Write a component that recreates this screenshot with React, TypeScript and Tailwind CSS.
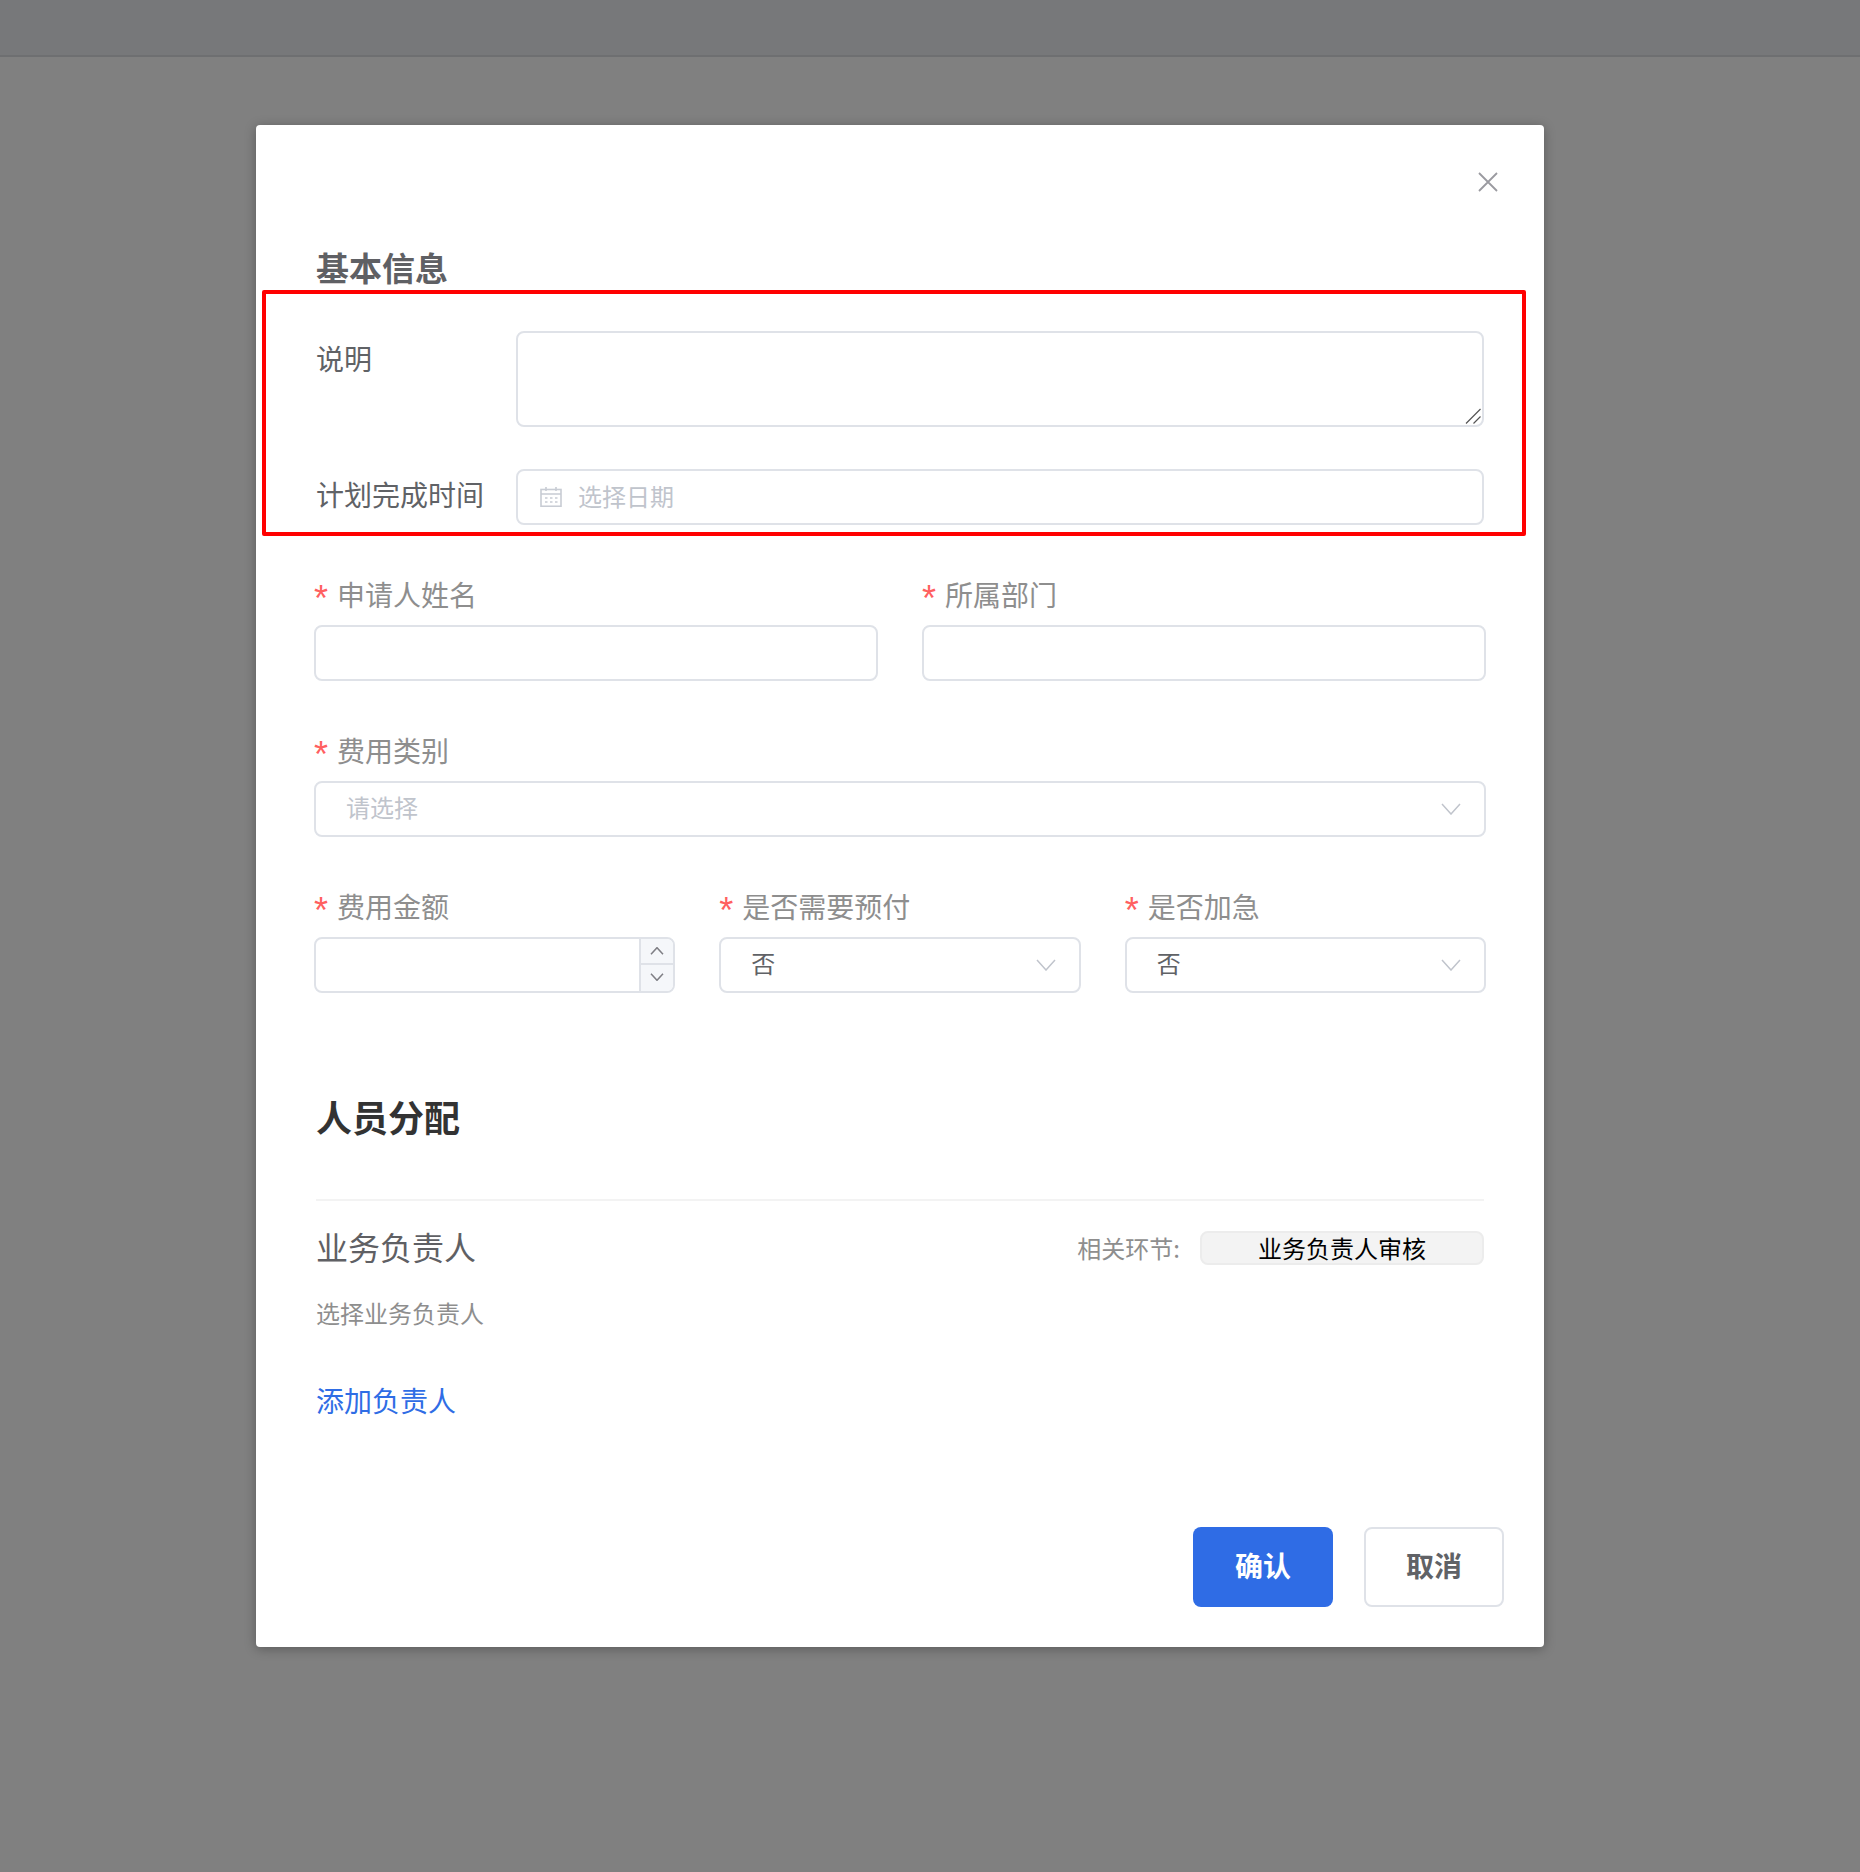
import React from 'react';

const labelClass = 'text-[28px] leading-[40px] text-[#8e8e8e]';
const fieldClass =
  'h-[56px] w-full rounded-[8px] border-2 border-[#dfe2e8] bg-white text-[24px] text-[#606266] outline-none placeholder:text-[#c0c4cc]';

const Chevron: React.FC<{ up?: boolean; className?: string }> = ({ up, className }) => (
  <svg viewBox="0 0 20 12" fill="none" stroke="currentColor" strokeWidth="1.5" className={className}>
    <path d={up ? 'M1 11 L10 1 L19 11' : 'M1 1 L10 11 L19 1'} vectorEffect="non-scaling-stroke" />
  </svg>
);

const CalendarIcon: React.FC = () => (
  <svg viewBox="0 0 22 20" fill="none" stroke="#c8ccd4" strokeWidth="1.6" className="h-[20px] w-[22px] shrink-0">
    <rect x="1" y="2.5" width="20" height="16.75" />
    <path d="M1 7 H21 M6 0 V4 M16 0 V4" />
    <path d="M5 11 H7.5 M10 11 H12.5 M15 11 H17.5 M5 15 H7.5 M10 15 H12.5 M15 15 H17.5" />
  </svg>
);

const RequiredLabel: React.FC<{ text: string }> = ({ text }) => (
  <div className={`${labelClass} -mt-[1px] mb-[11px] flex`}>
    <span className="mr-[10px] h-[40px] w-[13px] font-['Liberation_Sans',sans-serif] text-[36px] leading-[50px] text-[#ff6060]">*</span>
    {text}
  </div>
);

const SelectBox: React.FC<{ value?: string; placeholder?: string }> = ({ value, placeholder }) => (
  <div className="flex h-[56px] items-center justify-between rounded-[8px] border-2 border-[#dfe2e8] bg-white pl-[30px] pr-[23px] text-[24px]">
    <span className={value ? 'pb-[4px] text-[#606266]' : 'pb-[4px] text-[#c0c4cc]'}>{value || placeholder}</span>
    <Chevron className="h-[12px] w-[20px] text-[#c0c4cc]" />
  </div>
);

const App: React.FC = () => {
  return (
    <div className="h-[1872px] w-full overflow-hidden bg-[#808080] font-['Noto_Sans_CJK_SC','Liberation_Sans',sans-serif]">
      <div className="h-[57px] border-b-2 border-[#6e6f71] bg-[#77787a]" />

      <div className="ml-[256px] mt-[68px] w-[1288px] rounded-[4px] bg-white pb-[40px] pt-[47px] shadow-[0_2px_12px_rgba(0,0,0,0.3)]">
        <div className="flex justify-end pr-[46px]">
          <svg viewBox="0 0 20 20" fill="none" stroke="#9a9aa0" strokeWidth="1.8" className="h-[20px] w-[20px]">
            <path d="M1 1 L19 19 M19 1 L1 19" />
          </svg>
        </div>

        <h2 className="ml-[60px] mt-[55px] text-[33px] font-bold leading-[40px] text-[#5f6064]">基本信息</h2>

        {/* red annotation box from the original picture */}
        <div className="ml-[6px] mt-[3px] w-[1264px] rounded-[2px] border-4 border-[#ff0000] pb-[7px] pl-[50px] pr-[38px] pt-[37px]">
          <div className="flex items-start">
            <label className="mt-[7px] w-[200px] shrink-0 text-[28px] leading-[40px] text-[#606266]">说明</label>
            <div className="relative w-full">
              <textarea className="block h-[96px] w-full resize-none rounded-[8px] border-2 border-[#dfe2e8] bg-white outline-none" />
              <svg viewBox="0 0 16 16" fill="none" stroke="#555555" strokeWidth="1.2" className="absolute bottom-[3px] right-[3px] h-[16px] w-[16px]">
                <path d="M1 15.5 L15.5 1 M8.5 15.5 L15.5 8.5" />
              </svg>
            </div>
          </div>
          <div className="mt-[42px] flex items-start">
            <label className="mt-[5px] w-[200px] shrink-0 text-[28px] leading-[40px] text-[#606266]">计划完成时间</label>
            <div className="flex h-[56px] w-full items-center gap-[16px] rounded-[8px] border-2 border-[#dfe2e8] bg-white pl-[22px]">
              <CalendarIcon />
              <span className="pb-[2px] text-[24px] text-[#c0c4cc]">选择日期</span>
            </div>
          </div>
        </div>

        <div className="ml-[58px] mt-[39px] w-[1172px]">
          <div className="grid grid-cols-2 gap-x-[44px]">
            <div>
              <RequiredLabel text="申请人姓名" />
              <input className={fieldClass} />
            </div>
            <div>
              <RequiredLabel text="所属部门" />
              <input className={fieldClass} />
            </div>
          </div>

          <div className="mt-[50px]">
            <RequiredLabel text="费用类别" />
            <SelectBox placeholder="请选择" />
          </div>

          <div className="mt-[50px] grid grid-cols-3 gap-x-[44px]">
            <div>
              <RequiredLabel text="费用金额" />
              <div className="flex h-[56px] overflow-hidden rounded-[8px] border-2 border-[#dfe2e8] bg-white">
                <input className="min-w-0 flex-1 outline-none" />
                <div className="flex w-[34px] flex-col border-l-2 border-[#dfe2e8] bg-[#f5f7fa] text-[#7f7f85]">
                  <div className="flex flex-1 items-center justify-center border-b-2 border-[#dfe2e8]">
                    <Chevron up className="h-[8px] w-[14px]" />
                  </div>
                  <div className="flex flex-1 items-center justify-center pb-[2px]">
                    <Chevron className="h-[8px] w-[14px]" />
                  </div>
                </div>
              </div>
            </div>
            <div>
              <RequiredLabel text="是否需要预付" />
              <SelectBox value="否" />
            </div>
            <div>
              <RequiredLabel text="是否加急" />
              <SelectBox value="否" />
            </div>
          </div>
        </div>

        <div className="ml-[60px] mr-[60px]">
          <h2 className="mt-[99px] text-[36px] font-bold leading-[48px] text-[#333333]">人员分配</h2>
          <div className="mt-[59px] h-[2px] bg-[#f3f3f3]" />

          <div className="mt-[25px] flex h-[44px] items-center justify-between">
            <div className="-mt-[4px] text-[32px] leading-[44px] text-[#5f6064]">业务负责人</div>
            <div className="flex items-center gap-[20px]">
              <span className="text-[24px] text-[#8e8e8e]">相关环节:</span>
              <div className="flex h-[34px] w-[284px] items-center justify-center rounded-[8px] border-2 border-[#ececec] bg-[#f3f3f3] text-[24px] text-black">
                业务负责人审核
              </div>
            </div>
          </div>

          <div className="mt-[27px] text-[24px] leading-[32px] text-[#8e8e8e]">选择业务负责人</div>
          <div className="mt-[51px] text-[28px] leading-[40px] text-[#2f6de5]">添加负责人</div>
        </div>

        <div className="mt-[107px] flex justify-end gap-[31px] pr-[40px]">
          <button className="h-[80px] w-[140px] rounded-[8px] bg-[#2f6ce5] pb-[4px] text-[28px] font-bold text-white">确认</button>
          <button className="h-[80px] w-[140px] rounded-[8px] border-2 border-[#dfe2e8] bg-white pb-[4px] text-[28px] font-bold text-[#606266]">取消</button>
        </div>
      </div>
    </div>
  );
};

export default App;
